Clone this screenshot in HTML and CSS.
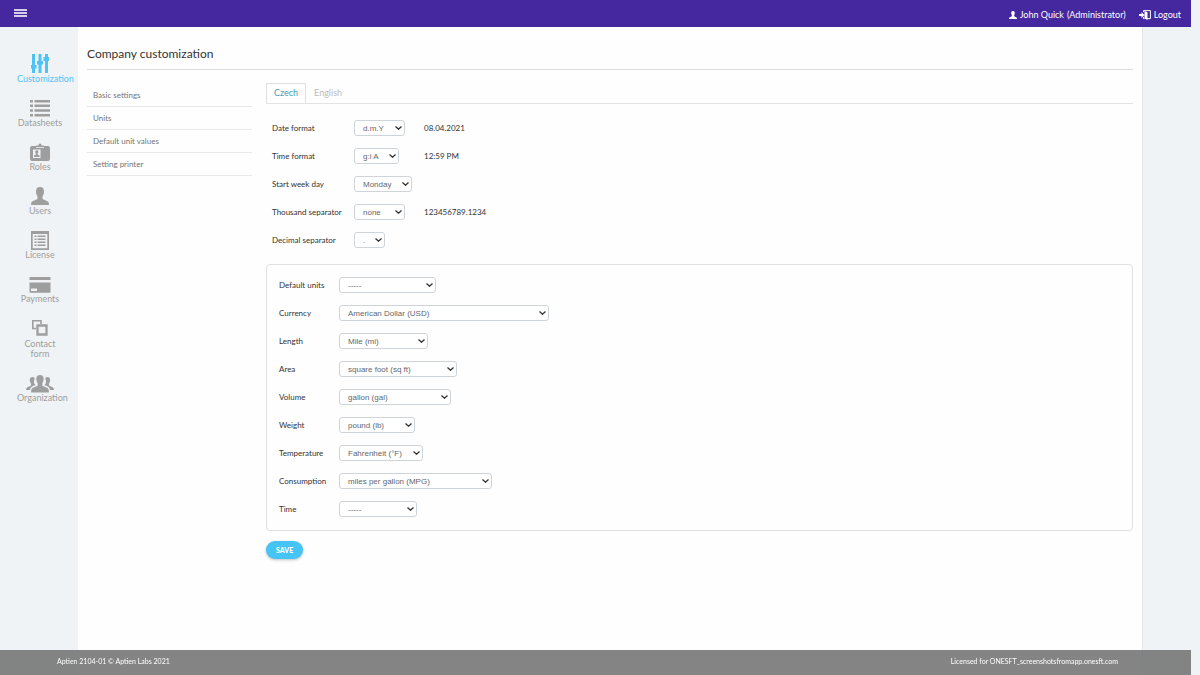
FILE: index.html
```html
<!DOCTYPE html>
<html lang="en">
<head>
<meta charset="utf-8">
<meta name="viewport" content="width=device-width, initial-scale=1">
<title>Company customization</title>
<link rel="stylesheet" href="styles.css">
</head>
<body>
<header class="topbar">
  <button class="menu-button" type="button" aria-label="Menu">
    <svg width="13" height="10" viewBox="0 0 13 10" fill="currentColor"><path d="M0 0h13v2H0zM0 3h13v2H0zM0 6h13v2H0z"/></svg>
  </button>
  <div class="account">
    <a class="account-link" href="#">
      <svg width="8" height="8" viewBox="0 0 18 18" fill="currentColor"><path d="M9 0C6 0 5 2 5 4.500 5 7 6 8 6.500 9.500V12L1 14.500Q0 15 0 18H18Q18 15 17 14.500L11.500 12V9.500C12 8 13 7 13 4.500 13 2 12 0 9 0z"/></svg>
      <span>John Quick</span><span>(Administrator)</span>
    </a>
    <a class="account-link" href="#">
      <svg width="12" height="10" viewBox="0 0 12 10"><path d="M4.500 2V.6h6.900v8H8M4.500 7v1.600h1" fill="none" stroke="currentColor"/><path d="M5.500 1l3 1.200V10l-3-1.400zM0 4h2.500V2l3 3-3 3V6H0z" fill="currentColor"/></svg>
      <span>Logout</span>
    </a>
  </div>
</header>

<div class="body">
  <nav class="sidebar" aria-label="Administration">
    <a class="side-item active" href="#">
      <svg width="18" height="20" viewBox="0 0 18 20" fill="currentColor"><path d="M1 0h3v11h1.500v3.500H4V19H1v-4.500H0V11h1zM7.500 0h3v7H12v3.500h-1.500V19h-3v-8.500H6V7h1.500zM14 0h3v3h1v4h-1v12h-3V7h-1.500V3H14z"/></svg>
      <span>Customization</span>
    </a>
    <a class="side-item" href="#">
      <svg width="20" height="20" viewBox="0 0 20 20" fill="currentColor"><path d="M0 2h3v2.500H0zM4.500 2H20v2.500H4.500zM0 6.500h3V9H0zM4.500 6.500H20V9H4.500zM0 11.200h3v2.500H0zM4.500 11.200H20v2.500H4.500zM0 16h3v2.500H0zM4.500 16H20v2.500H4.500z"/></svg>
      <span>Datasheets</span>
    </a>
    <a class="side-item" href="#">
      <svg width="20" height="20" viewBox="0 0 20 20"><path fill="currentColor" fill-rule="evenodd" d="M2 4h16q2 0 2 2v11q0 2-2 2H2q-2 0-2-2V6q0-2 2-2zM3 7.500V16h7.500V7.500z"/><path fill="currentColor" d="M6 3.500h2.500Q8.500 1.500 10 1.500t1.500 2H14V5H6zM6.800 8.300c-2.200 0-1.800 2.700-.8 3.500v.8l-2 .9v1.500h5.600v-1.500l-2-.9v-.8c1-.8 1.400-3.500-.8-3.500z"/><path d="M6 5.500h8" stroke="#eff3f6" stroke-width=".8"/></svg>
      <span>Roles</span>
    </a>
    <a class="side-item" href="#">
      <svg width="18" height="20" viewBox="0 0 18 20" fill="currentColor"><path d="M9 1C6 1 5 3 5 5.500 5 8 6 9 6.500 10.500V13L1 15.500Q0 16 0 19H18Q18 16 17 15.500L11.500 13V10.500C12 9 13 8 13 5.500 13 3 12 1 9 1z"/></svg>
      <span>Users</span>
    </a>
    <a class="side-item" href="#">
      <svg width="18" height="20" viewBox="0 0 18 20" fill="currentColor"><path fill-rule="evenodd" d="M0 1h18v19H0zM1.700 4v14.300h14.600V4z"/><path d="M3.500 5.500h2v1.500h-2zM6.500 5.500h8v1.500h-8zM3.500 8.500h2v1.500h-2zM6.500 8.500h8v1.500h-8zM3.500 11.500h2v1.500h-2zM6.500 11.500h8v1.500h-8zM3.500 14.500h2v1.500h-2zM6.500 14.500h8v1.500h-8z"/></svg>
      <span>License</span>
    </a>
    <a class="side-item" href="#">
      <svg width="22" height="20" viewBox="0 0 22 20" fill="currentColor"><path fill-rule="evenodd" d="M.5 3h21v3H.5zM.5 8.500h21V18q0 .7-.7.700H1.200Q.5 18.700.5 18zM2 14.500V17h6v-2.500z"/></svg>
      <span>Payments</span>
    </a>
    <a class="side-item contact" href="#">
      <svg width="16" height="16" viewBox="0 0 16 16" fill="none" stroke="currentColor"><path stroke-width="1.600" d="M4 8.500H.8V.8H9V4"/><path stroke-width="2.300" d="M5.500 5.500h9v9h-9z"/></svg>
      <span>Contact form</span>
    </a>
    <a class="side-item" href="#">
      <svg width="28" height="20" viewBox="0 0 28 20" fill="currentColor"><path d="M14 2c-3.500 0-4 3-3.500 5.500.3 1.500 1 2 1.200 3v2.300L6.500 15Q5 15.800 5 19.500H23Q23 15.800 21.500 15l-5.200-2.200V10.500c.2-1 .9-1.500 1.200-3C18 5 17.500 2 14 2z"/><path d="M6.500 4C3.500 4 3.700 7 4 8.500c.3 1 1 1.500 1 2.500v1.500L1 14.500Q0 15 0 17h4q.5-3 2.500-3.700l3-1.300-1.300-1.500q-.5-3 .6-5.500Q8 4 6.500 4zM21.500 4c3 0 2.800 3 2.500 4.500-.3 1-1 1.500-1 2.500v1.500l4 2q1 .5 1 2.500h-4q-.5-3-2.500-3.700l-3-1.300 1.300-1.500q.5-3-.6-5.500.8-1 2.300-1z"/></svg>
      <span>Organization</span>
    </a>
  </nav>

  <main class="content">
    <h1 class="page-title">Company customization</h1>
    <div class="columns">
      <nav class="submenu" aria-label="Customization">
        <a href="#">Basic settings</a>
        <a href="#">Units</a>
        <a href="#">Default unit values</a>
        <a href="#">Setting printer</a>
      </nav>

      <form class="settings">
        <div class="tabs" role="tablist">
          <button class="tab selected" type="button" role="tab" aria-selected="true">Czech</button>
          <button class="tab" type="button" role="tab" aria-selected="false">English</button>
        </div>
        <div class="formats">
          <div class="row"><label for="date">Date format</label><div class="control"><select class="w-51" id="date"><option>d.m.Y</option></select></div><output for="date">08.04.2021</output></div>
          <div class="row"><label for="timef">Time format</label><div class="control"><select class="w-45" id="timef"><option>g:i A</option></select></div><output for="timef">12:59 PM</output></div>
          <div class="row"><label for="day">Start week day</label><div class="control"><select class="w-58" id="day"><option>Monday</option></select></div></div>
          <div class="row"><label for="thousand">Thousand separator</label><div class="control"><select class="w-51" id="thousand"><option>none</option></select></div><output for="thousand">123456789.1234</output></div>
          <div class="row"><label for="decimal">Decimal separator</label><div class="control"><select class="w-31" id="decimal"><option>.</option></select></div></div>
        </div>
        <div class="units">
          <div class="row"><label for="units">Default units</label><select class="w-97" id="units"><option>-----</option></select></div>
          <div class="row"><label for="currency">Currency</label><select class="w-210" id="currency"><option>American Dollar (USD)</option></select></div>
          <div class="row"><label for="length">Length</label><select class="w-89" id="length"><option>Mile (mi)</option></select></div>
          <div class="row"><label for="area">Area</label><select class="w-118" id="area"><option>square foot (sq ft)</option></select></div>
          <div class="row"><label for="volume">Volume</label><select class="w-112" id="volume"><option>gallon (gal)</option></select></div>
          <div class="row"><label for="weight">Weight</label><select class="w-76" id="weight"><option>pound (lb)</option></select></div>
          <div class="row"><label for="temperature">Temperature</label><select class="w-84" id="temperature"><option>Fahrenheit (°F)</option></select></div>
          <div class="row"><label for="consumption">Consumption</label><select class="w-153" id="consumption"><option>miles per gallon (MPG)</option></select></div>
          <div class="row"><label for="time">Time</label><select class="w-78" id="time"><option>-----</option></select></div>
        </div>
        <button class="save" type="submit">SAVE</button>
      </form>
    </div>
  </main>
</div>

<footer class="footer">
  <span>Aptien 2104-01 © Aptien Labs 2021</span>
  <span>Licensed for ONESFT_screenshotsfromapp.onesft.com</span>
</footer>
</body>
</html>
```
FILE: styles.css
```css
* { box-sizing: border-box; }

body {
  display: flex;
  flex-direction: column;
  min-height: 100vh;
  margin: 0;
  padding-right: 9px;
  background: #eff3f6;
  color: #333;
  font: 8px/12px Lato, sans-serif;
}

a { color: inherit; text-decoration: none; }
button { font-family: inherit; cursor: pointer; }
svg { display: block; flex: none; }

.topbar {
  display: flex;
  align-items: center;
  justify-content: space-between;
  height: 27px;
  padding: 0 10px 0 14px;
  background: #4527a0;
  color: #fff;
}

.menu-button {
  padding: 0;
  border: 0;
  background: none;
  color: #d5cdea;
}

.account {
  display: flex;
  gap: 13px;
  padding-top: 2px;
  font-size: 9px;
}

.account-link { display: flex; align-items: center; gap: 3px; }

.body { display: flex; flex: 1; }

.sidebar {
  display: flex;
  flex-direction: column;
  gap: 14px;
  width: 78px;
  padding: 27px 0 0 17px;
  color: #9e9e9e;
  font-size: 9px;
  line-height: 10px;
}

.side-item {
  display: flex;
  flex-direction: column;
  align-items: safe center;
  width: 46px;
}

.side-item.active { color: #4fc3f7; }

.contact { gap: 3px; padding: 2px 5px 0; text-align: center; }

.content {
  flex: 1;
  margin-right: 48px;
  padding: 19px 9px 90px;
  border-right: 1px solid #e4e8ea;
  background: #fefefe;
}

.page-title {
  margin: 0;
  padding-bottom: 7px;
  border-bottom: 1px solid #ddd;
  font-size: 12px;
  font-weight: 400;
  line-height: 16px;
}

.columns {
  display: flex;
  gap: 14px;
  padding-top: 13px;
}

.submenu { width: 165px; padding-top: 1px; color: #757575; }

.submenu a {
  display: block;
  padding: 5px 6px;
  border-bottom: 1px solid #e8e8e8;
}

.settings { flex: 1; }

.tabs {
  display: flex;
  border-bottom: 1px solid #e4e4e4;
}

.tab {
  height: 20px;
  padding: 0 7px 2px;
  border: 1px solid transparent;
  border-bottom: 0;
  background: none;
  color: #bbb;
  font-size: 9px;
}

.tab.selected { border-color: #e0e0e0; color: #42a0b8; }

.formats {
  display: grid;
  gap: 12px;
  padding: 16px 6px;
}

.row { display: flex; align-items: center; }

.formats label { width: 82px; }
.control { width: 70px; }

.units {
  display: grid;
  gap: 12px;
  padding: 12px 12px 13px;
  border: 1px solid #e0e0e0;
  border-radius: 4px;
}

.units label { width: 60px; }

select {
  display: block;
  height: 16px;
  padding: 1px 8px 0;
  border: 1px solid #cfd4d8;
  border-radius: 3px;
  appearance: none;
  background: #fff url("data:image/svg+xml,%3Csvg xmlns='http://www.w3.org/2000/svg' width='7' height='4' viewBox='0 0 7 4'%3E%3Cpath d='M.5.5l3 2.700 3-2.700' fill='none' stroke='%23333' stroke-width='1.300'/%3E%3C/svg%3E") no-repeat right 2px center;
  color: #5f676e;
  font: 8px/14px "Liberation Sans", sans-serif;
}

.w-31 { width: 31px; }
.w-45 { width: 45px; }
.w-51 { width: 51px; }
.w-58 { width: 58px; }
.w-76 { width: 76px; }
.w-78 { width: 78px; }
.w-84 { width: 84px; }
.w-89 { width: 89px; }
.w-97 { width: 97px; }
.w-112 { width: 112px; }
.w-118 { width: 118px; }
.w-153 { width: 153px; }
.w-210 { width: 210px; }

.save {
  height: 18px;
  margin-top: 10px;
  padding: 0 10px;
  border: 0;
  border-radius: 9px;
  background: #45c4f5;
  box-shadow: 0 1px 3px rgba(0, 0, 0, 0.25);
  color: #fff;
  font-size: 7px;
  font-weight: 900;
}

.footer {
  position: fixed;
  right: 9px;
  bottom: 0;
  left: 0;
  display: flex;
  align-items: center;
  justify-content: space-between;
  height: 25px;
  padding: 0 73px 3px 57px;
  background: rgba(115, 115, 115, 0.88);
  color: #fff;
  font-size: 7px;
}
```
